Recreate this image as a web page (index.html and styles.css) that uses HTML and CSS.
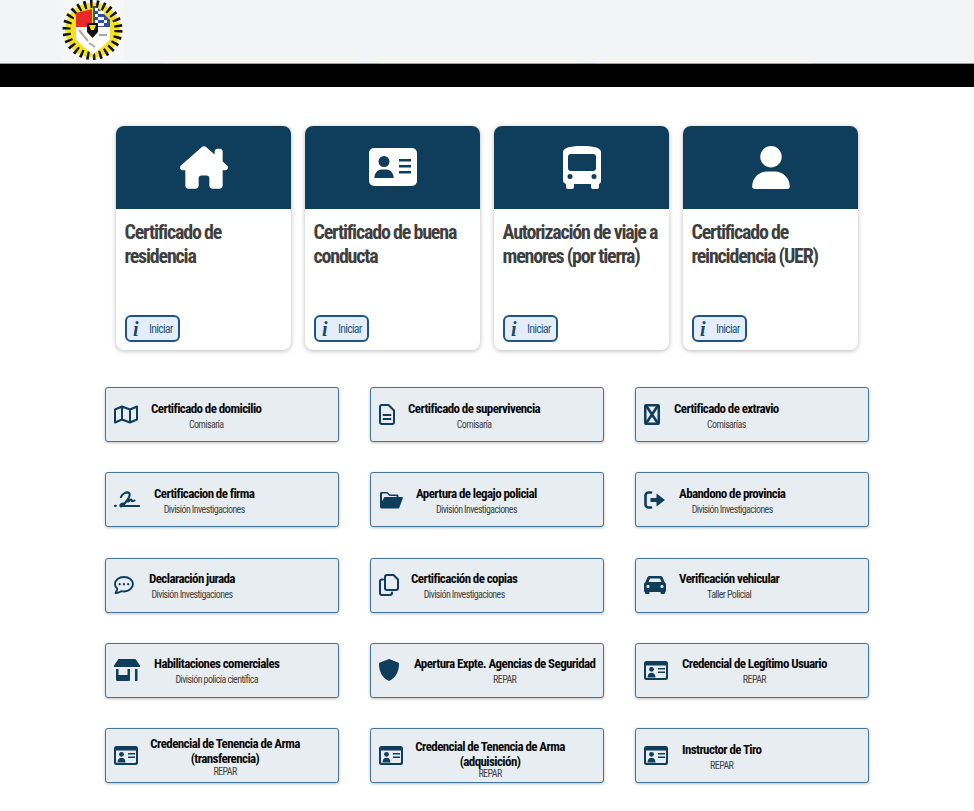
FILE: index.html
```html
<!DOCTYPE html>
<html lang="es">
<head>
<meta charset="utf-8">
<title>Trámites</title>
<link rel="stylesheet" href="styles.css">
</head>
<body>
<svg class="defs" width="0" height="0" aria-hidden="true">
  <symbol id="idcard" viewBox="0 0 24 19">
    <path fill-rule="evenodd" d="M2.500 0h19A2.500 2.500 0 0 1 24 2.500v14a2.500 2.500 0 0 1-2.500 2.500h-19A2.500 2.500 0 0 1 0 16.500v-14A2.500 2.500 0 0 1 2.500 0zM2 4.500V15.700a1.200 1.200 0 0 0 1.200 1.200h17.600a1.200 1.200 0 0 0 1.200-1.200V4.500z"/>
    <circle cx="7.500" cy="8.300" r="2.400"/>
    <path d="M3.500 16.400c0-3 1.700-4.700 4-4.700s4 1.700 4 4.700z"/>
    <path d="M14 7h7v1.500h-7zM14 10.500h7V12h-7z"/>
  </symbol>
</svg>
<header class="top">
  <div class="logo-row">
    <svg class="logo" viewBox="0 0 62 62">
      <rect width="62" height="62" fill="#f6f6f6"/>
      <circle cx="30.500" cy="31" r="27.500" fill="#f5e21f"/>
      <circle cx="30.500" cy="31" r="25.500" fill="none" stroke="#111" stroke-width="9" stroke-dasharray="2.400 3.760"/>
      <circle cx="30.500" cy="31" r="22" fill="#f5e21f"/>
      <path d="M14 14l16-4v18H14z" fill="#ea2a2a"/>
      <path d="M31 7h3l14 14v7H31z" fill="#2d4fa8"/>
      <path d="M33 9h3v3h-3zM39 12h3v3h-3zM33 15h3v3h-3zM39 18h3v3h-3zM33 21h3v3h-3zM39 24h3v3h-3zM36 12h3v3h-3zM36 18h3v3h-3zM42 21h3v3h-3zM36 24h3v3h-3z" fill="#fff"/>
      <path d="M14 28h34v12c-4 6-11 9-17 16-6-7-13-10-17-16z" fill="#fff"/>
      <path d="M25 24h11v9l-5.500 6-5.500-6z" fill="#111"/>
      <path d="M27 26h7l-2 5h-3z" fill="#f5e21f"/>
      <path d="M17 31l9 11M37 36h8M27 44l6 4" stroke="#aaa" stroke-width="2" fill="none"/>
    </svg>
  </div>
  <div class="strip">
    <span class="seg seg-a"></span><span class="seg seg-b"></span><span class="seg seg-c"></span>
  </div>
</header>
<div class="blackbar"></div>
<main class="page">
  <section class="cards">
    <article class="card">
      <div class="card-head">
        <svg class="ci ci-home" viewBox="0 0 576 512"><path d="M543.800 287.600c17 0 32-14 32-32.100c1-9-3-17-11-24L512 185V64c0-17.700-14.300-32-32-32H448c-17.700 0-32 14.300-32 32v36.700L309.500 7c-6-5-14-7-21-7s-15 1-22 8L10 231.500c-7 7-10 15-10 24c0 18 14 32.100 32 32.100h32v69.700c-.1 .9-.1 1.800-.1 2.800V472c0 22.100 17.900 40 40 40h16c1.200 0 2.400-.1 3.600-.2c1.500 .1 3 .2 4.500 .2H160h24c22.100 0 40-17.900 40-40V448 384c0-17.700 14.300-32 32-32h64c17.700 0 32 14.300 32 32v64 24c0 22.100 17.900 40 40 40h24 32.500c1.400 0 2.800 0 4.200-.1c1.100 .1 2.200 .1 3.300 .1h16c22.100 0 40-17.900 40-40V455.800c.3-2.600 .5-5.300 .5-8.100l-.7-160.200h32z"/></svg>
      </div>
      <div class="card-body">
        <h2 class="card-title">Certificado de residencia</h2>
        <a class="start"><span class="i">i</span><span class="start-t">Iniciar</span></a>
      </div>
    </article>
    <article class="card">
      <div class="card-head">
        <svg class="ci ci-id" viewBox="0 0 48 38"><path fill-rule="evenodd" d="M5 0h38a5 5 0 0 1 5 5v28a5 5 0 0 1-5 5H5a5 5 0 0 1-5-5V5a5 5 0 0 1 5-5zM15 19a5.500 5.500 0 1 0 0-11 5.500 5.500 0 0 0 0 11zM6 30h18c.500 0 .800-.4.700-1-.5-4.500-3.700-7.500-7.200-7.500h-5C9 21.500 6 24.500 5.400 29c-.1.600.1 1 .6 1zM30 11h12v2.500H30zM30 17h12v2.500H30zM30 23h12v2.500H30z"/></svg>
      </div>
      <div class="card-body">
        <h2 class="card-title">Certificado de buena conducta</h2>
        <a class="start"><span class="i">i</span><span class="start-t">Iniciar</span></a>
      </div>
    </article>
    <article class="card">
      <div class="card-head">
        <svg class="ci ci-bus" viewBox="0 0 38 43"><path fill-rule="evenodd" d="M19 0c10 0 19 1.500 19 6v29c0 1.500-1 2.500-2 3v3a2 2 0 0 1-2 2h-4a2 2 0 0 1-2-2v-3H11v3a2 2 0 0 1-2 2H5a2 2 0 0 1-2-2v-3c-1-.5-3-1.500-3-3V6C0 1.500 9 0 19 0zM8 8a3 3 0 0 0-3 3v11a3 3 0 0 0 3 3h22a3 3 0 0 0 3-3V11a3 3 0 0 0-3-3zM7 33a2.500 2.500 0 1 0 0-5 2.500 2.500 0 0 0 0 5zM31 33a2.500 2.500 0 1 0 0-5 2.500 2.500 0 0 0 0 5z"/></svg>
      </div>
      <div class="card-body">
        <h2 class="card-title">Autorización de viaje a menores (por tierra)</h2>
        <a class="start"><span class="i">i</span><span class="start-t">Iniciar</span></a>
      </div>
    </article>
    <article class="card">
      <div class="card-head">
        <svg class="ci ci-user" viewBox="0 0 448 512"><path d="M224 256A128 128 0 1 0 224 0a128 128 0 1 0 0 256zm-45.700 48C79.800 304 0 383.800 0 482.300C0 498.700 13.300 512 29.700 512H418.300c16.400 0 29.700-13.300 29.700-29.700C448 383.800 368.200 304 269.700 304H178.300z"/></svg>
      </div>
      <div class="card-body">
        <h2 class="card-title">Certificado de reincidencia (UER)</h2>
        <a class="start"><span class="i">i</span><span class="start-t">Iniciar</span></a>
      </div>
    </article>
  </section>

  <section class="grid">
    <a class="row">
      <svg class="ri" viewBox="0 0 24 19" preserveAspectRatio="xMinYMid meet"><path class="ol" d="M1 4.500l7-3 8 3 7-3v13l-7 3-8-3-7 3zM8 1.500v13M16 4.500v13"/></svg>
      <div class="rt o46"><b>Certificado de domicilio</b><small>Comisaría</small></div>
    </a>
    <a class="row">
      <svg class="ri ri-doc" viewBox="0 0 16 21" preserveAspectRatio="xMinYMid meet"><path class="ol" d="M3 1h6.500L15 6.500V18a2 2 0 0 1-2 2H3a2 2 0 0 1-2-2V3a2 2 0 0 1 2-2zM4.500 11h7M4.500 15h7"/></svg>
      <div class="rt o38"><b>Certificado de supervivencia</b><small>Comisaría</small></div>
    </a>
    <a class="row">
      <svg class="ri ri-doc" viewBox="0 0 16 21" preserveAspectRatio="xMinYMid meet"><rect width="16" height="21" rx="2"/><rect class="lite" x="2.500" y="2.500" width="11" height="16"/><path class="ol thick" d="M3 3l10 15M13 3L3 18"/></svg>
      <div class="rt o39"><b>Certificado de extravio</b><small>Comisarías</small></div>
    </a>

    <a class="row">
      <svg class="ri ri-sign" viewBox="0 0 26 18" preserveAspectRatio="xMinYMid meet"><path class="ol heavy" d="M7 6c1-3.500 6-5.500 8-4 2 2-1 6.500-4 10-2 2.500-4 4-4.500 3-.5-1 1-2.500 3-2.500M14 10.500c1.500-.5 2-2 3-2 .8 0 .3 1.700 1.200 1.700s1.300-.7 2.300-.7M1 14.800h.8M8 15h17"/></svg>
      <div class="rt o49"><b>Certificacion de firma</b><small>División Investigaciones</small></div>
    </a>
    <a class="row">
      <svg class="ri ri-exit" viewBox="0 0 24 18" preserveAspectRatio="xMinYMid meet"><path d="M1 15.500V2.500C1 1.500 1.800 1 2.500 1h6l2.500 2.500h7c1 0 1.500.6 1.500 1.500v1h-2V5h-7L8 2.500H3v8L5 6.500c.3-.5.700-.5 1.200-.5H23c.7 0 1.100.6.800 1.200l-3.500 9.500c-.2.500-.6.800-1.200.8H2.500C1.500 17.500 1 16.700 1 15.500z"/></svg>
      <div class="rt o46"><b>Apertura de legajo policial</b><small>División Investigaciones</small></div>
    </a>
    <a class="row">
      <svg class="ri ri-exit" viewBox="0 0 22 18" preserveAspectRatio="xMinYMid meet"><path class="ol thick" d="M7 1.500H4.500a3 3 0 0 0-3 3v9a3 3 0 0 0 3 3H7"/><path d="M6.500 7h6V2.500L21 9l-8.500 6.500V11h-6z"/></svg>
      <div class="rt o44"><b>Abandono de provincia</b><small>División Investigaciones</small></div>
    </a>

    <a class="row">
      <svg class="ri ri-chat" viewBox="0 0 21 19" preserveAspectRatio="xMinYMid meet"><path class="ol" d="M10.500 1C5.300 1 1 4.200 1 8.500c0 2 .9 3.700 2.400 5-.2 2-1.300 3.500-1.900 4.500 2.500 0 4.800-1 6.200-2 .9.200 1.800.3 2.800.3 5.200 0 9.500-3.500 9.500-7.800S15.700 1 10.500 1z"/><circle cx="6" cy="8.700" r="1.200"/><circle cx="10.500" cy="8.700" r="1.200"/><circle cx="15" cy="8.700" r="1.200"/></svg>
      <div class="rt o44"><b>Declaración jurada</b><small>División Investigaciones</small></div>
    </a>
    <a class="row">
      <svg class="ri ri-copy" viewBox="0 0 20 22" preserveAspectRatio="xMinYMid meet"><path class="ol" d="M8 1h6.500L19 5.500V14a2 2 0 0 1-2 2H8a2 2 0 0 1-2-2V3a2 2 0 0 1 2-2zM4 5.500H3a2 2 0 0 0-2 2V19a2 2 0 0 0 2 2h8a2 2 0 0 0 2-2v-.5"/></svg>
      <div class="rt o41"><b>Certificación de copias</b><small>División Investigaciones</small></div>
    </a>
    <a class="row">
      <svg class="ri ri-exit" viewBox="0 0 22 18" preserveAspectRatio="xMinYMid meet"><path fill-rule="evenodd" d="M5.500 0h11c1 0 1.800.6 2.200 1.500L20.500 6c1 .7 1.500 1.700 1.500 2.800V15a1 1 0 0 1-1 1v1a1 1 0 0 1-1 1h-2.500a1 1 0 0 1-1-1v-1h-11v1a1 1 0 0 1-1 1H2a1 1 0 0 1-1-1v-1a1 1 0 0 1-1-1V8.800C0 7.700.500 6.700 1.500 6l1.800-4.500C3.700.6 4.500 0 5.500 0zM6 2.500L4.500 6h13L16 2.500zM4 12a1.600 1.600 0 1 0 0-3.200A1.600 1.600 0 0 0 4 12zM18 12a1.600 1.600 0 1 0 0-3.200A1.600 1.600 0 0 0 18 12z"/></svg>
      <div class="rt o44"><b>Verificación vehicular</b><small>Taller Policial</small></div>
    </a>

    <a class="row">
      <svg class="ri ri-shop" viewBox="0 0 26 22" preserveAspectRatio="xMinYMid meet"><path d="M4.500 0h17L26 6.500c.3.800-.2 1.500-1 1.500H1C.2 8-.3 7.300 0 6.500z"/><path d="M2 10h2.500v6h9v-6H16v10.500a1.500 1.500 0 0 1-1.500 1.500h-11A1.500 1.500 0 0 1 2 20.500zM21 10h2.500v12H21z"/></svg>
      <div class="rt o49"><b>Habilitaciones comerciales</b><small>División policía científica</small></div>
    </a>
    <a class="row">
      <svg class="ri ri-shield" viewBox="0 0 20 22" preserveAspectRatio="xMinYMid meet"><path d="M10 0l9 3.400c.6.200 1 .8 1 1.500 0 6-2.300 13.500-10 17.100C2.300 18.400 0 10.900 0 4.900c0-.7.400-1.300 1-1.500z"/></svg>
      <div class="rt o44"><b>Apertura Expte. Agencias de Seguridad</b><small>REPAR</small></div>
    </a>
    <a class="row">
      <svg class="ri"><use href="#idcard"/></svg>
      <div class="rt o47"><b>Credencial de Legítimo Usuario</b><small>REPAR</small></div>
    </a>

    <a class="row">
      <svg class="ri"><use href="#idcard"/></svg>
      <div class="rt rt-two"><b>Credencial de Tenencia de Arma (transferencia)</b><small>REPAR</small></div>
    </a>
    <a class="row">
      <svg class="ri"><use href="#idcard"/></svg>
      <div class="rt rt-two rt-tight"><b>Credencial de Tenencia de Arma (adquisición)</b><small>REPAR</small></div>
    </a>
    <a class="row">
      <svg class="ri"><use href="#idcard"/></svg>
      <div class="rt o47"><b>Instructor de Tiro</b><small>REPAR</small></div>
    </a>
  </section>
</main>
</body>
</html>
```

FILE: styles.css
```css
* { box-sizing: border-box; }
html, body { margin: 0; padding: 0; background: #fff; }
body { font-family: "Roboto", "Open Sans", "Liberation Sans", sans-serif; font-stretch: 75%; overflow: hidden; height: 811px; }
.defs { display: block; height: 0; }

.top { height: 64px; background: #f3f4f6; overflow: hidden; display: flex; flex-direction: column; }
.logo-row { height: 63px; padding-left: 62px; flex: none; }
.logo { display: block; width: 62px; height: 62px; margin-top: -1px; }
.strip { height: 1px; background: #9a9a9a; display: flex; padding-left: 162px; gap: 18px; flex: none; }
.seg { height: 1px; background: #a9ab55; }
.seg-a { width: 198px; }
.seg-b { width: 199px; }
.seg-c { width: 217px; }
.blackbar { height: 23px; background: #000; }

.page { padding-top: 39px; }
.cards { display: flex; gap: 14px; padding-left: 116px; }
.card { width: 175px; height: 224px; background: #fff; border-radius: 8px; box-shadow: 0 1px 5px rgba(0,0,0,.28); overflow: hidden; display: flex; flex-direction: column; }
.card-head { height: 83px; background: #0f3d5c; display: flex; align-items: center; justify-content: center; flex: none; }
.ci { fill: #fff; display: block; margin-top: -1px; }
.ci-home { width: 48px; height: 43px; }
.ci-id { width: 48px; height: 38px; }
.ci-bus { width: 38px; height: 43px; }
.ci-user { width: 38px; height: 43px; }
.card-body { flex: 1; padding: 11px 4px 8px 9px; display: flex; flex-direction: column; justify-content: space-between; align-items: flex-start; }
.card-title { margin: 0 0 0 -.5px; font-size: 20px; line-height: 24px; font-weight: 700; color: #3f3f3f; letter-spacing: -1.200px; }
.start { width: 55px; height: 27px; border: 2px solid #1f5580; border-radius: 6px; background: #e6edfa; display: flex; align-items: center; padding-left: 6px; color: #2a5f87; }
.i { font-family: "Liberation Serif", serif; font-style: italic; font-weight: 700; font-size: 20px; color: #154a73; width: 16px; flex: none; line-height: 1; }
.start-t { font-size: 12px; letter-spacing: -.8px; }

.grid { display: grid; grid-template-columns: repeat(3, 234px); gap: 30.330px 31px; padding: 37px 0 0 105px; }
.row { height: 55px; background: #e8edf2; border: 1px solid #45749a; border-radius: 3px; box-shadow: 0 1px 3px rgba(0,0,0,.25); display: flex; align-items: center; padding-left: 8px; }
.ri { width: 24px; height: 19px; fill: #0f3d5c; flex: none; display: block; }
.ri-doc { height: 21px; }
.ri-chat { height: 18px; }
.ri-copy { height: 22px; }
.ri-exit { height: 18px; }
.ri-sign { height: 18px; width: 26px; margin-right: -2px; }
.ri-shield { height: 22px; }
.ri-shop { height: 22px; width: 26px; margin-right: -2px; }
.ol { fill: none; stroke: #0f3d5c; stroke-width: 2; stroke-linejoin: round; stroke-linecap: round; }
.thick { stroke-width: 2.6; }
.heavy { stroke-width: 2.2; }
.lite { fill: #e8edf2; }
.rt { display: flex; flex-direction: column; align-items: center; text-align: center; color: #000; padding-top: 3px; }
.rt b { font-size: 13px; line-height: 14px; font-weight: 700; color: #0a0a0a; display: block; letter-spacing: -.6px; }
.rt small { font-size: 10px; line-height: 12px; color: #444; margin-top: 3px; display: block; letter-spacing: -.6px; }
.rt-two { width: 150px; margin-left: 12px; }
.rt-two b { line-height: 15px; }
.rt-two small { margin-top: 0; }
.rt-tight { padding-top: 7px; }
.rt-tight small { margin-top: -1.500px; }
.o38 { margin-left: 5px; }
.o39 { margin-left: 6px; }
.o41 { margin-left: 8px; }
.o44 { margin-left: 11px; }
.o46 { margin-left: 13px; }
.o47 { margin-left: 14px; }
.o49 { margin-left: 16px; }
```
